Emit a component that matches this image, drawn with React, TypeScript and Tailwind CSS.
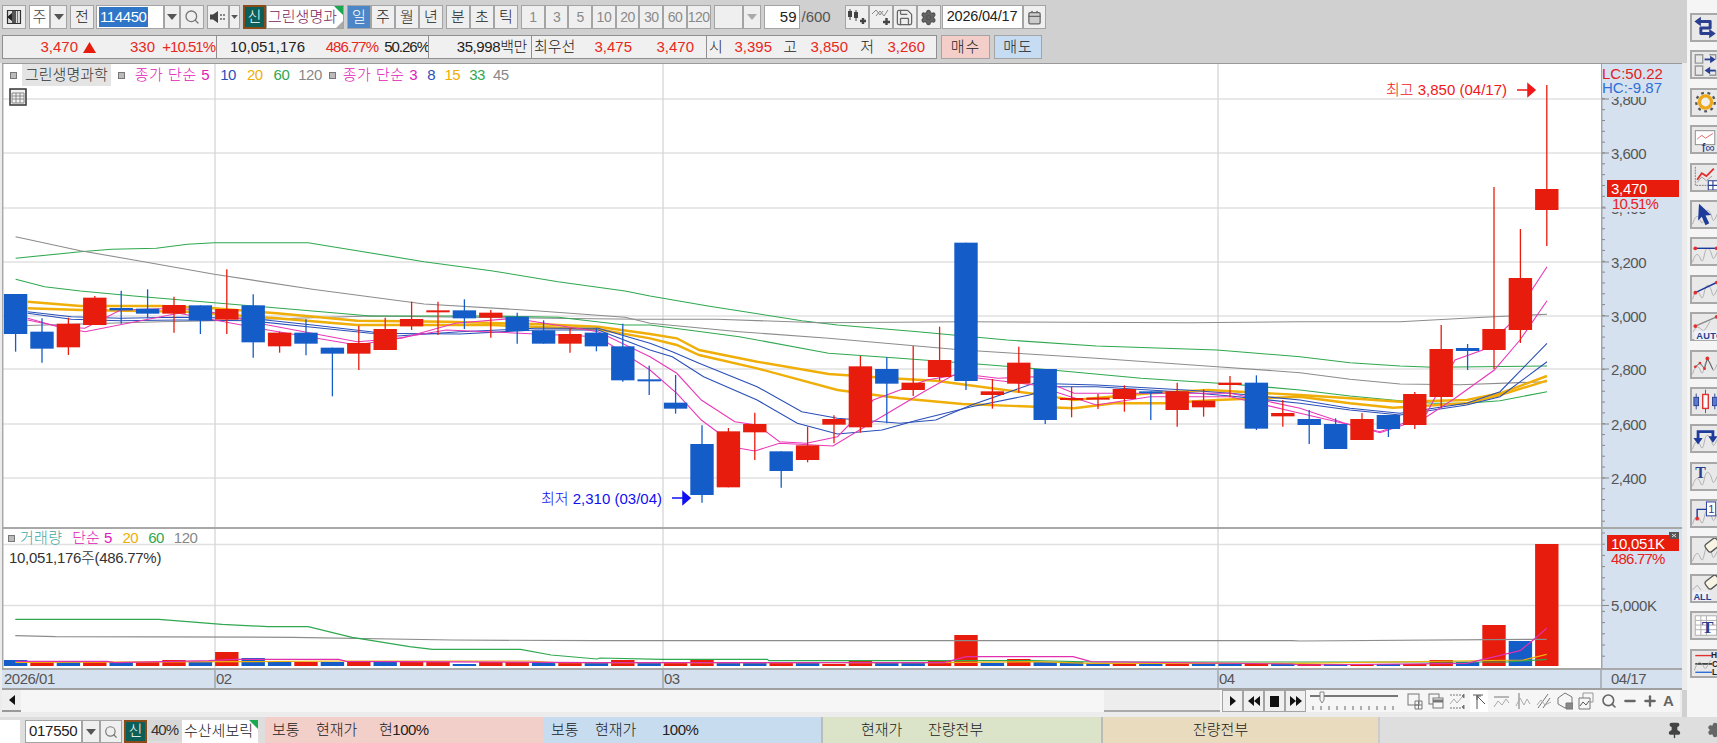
import { ReactNode } from "react"
import { Save, Search, Settings, Pin, Calendar, Minus, Plus } from "lucide-react"

const RED = "#e81c0c"
const BLUE = "#145cc8"

// coordinates were read off crops, so each helper maps a crop back to page px
const a = (p: number[][]) => p.map(([x, y]) => [x / 2.24, 230 + y / 3])
const b = (p: number[][]) => p.map(([x, y]) => [650 + x / 2.24, 230 + y / 3])
const c = (p: number[][]) => p.map(([x, y]) => [1300 + x / 3, 240 + y / 3])
const toPts = (p: number[][]) => p.map(([x, y]) => `${x.toFixed(1)},${y.toFixed(1)}`).join(" ")

const priceLines = [
  {
    color: "#2fa84f", w: 1.1, pts: [
      ...a([[35, 85], [180, 65], [250, 58], [350, 55], [420, 43], [480, 38], [690, 38], [800, 62], [950, 95], [1100, 122], [1250, 155], [1400, 183]]),
      ...b([[0, 198], [130, 228], [340, 272], [420, 285], [600, 305], [800, 330], [1000, 348], [1270, 360]]),
      ...c([[0, 350], [150, 368], [300, 378], [400, 382], [741, 378]]),
    ],
  },
  {
    color: "#8c8c8c", w: 1.1, pts: [
      ...a([[35, 20], [180, 62], [300, 90], [480, 133], [700, 178], [950, 222], [1200, 242], [1400, 262]]),
      ...b([[0, 280], [200, 305], [400, 325], [700, 360], [1000, 385], [1270, 410]]),
      ...c([[0, 398], [150, 418], [300, 432], [480, 434], [741, 425]]),
    ],
  },
  {
    color: "#8c8c8c", w: 1.1, pts: [
      ...a([[40, 287], [360, 275], [480, 272], [830, 258], [1430, 268]]),
      ...b([[150, 268], [380, 278], [700, 275], [1210, 278]]),
      ...c([[0, 245], [300, 245], [550, 232], [741, 223]]),
    ],
  },
  {
    color: "#2fa84f", w: 1.1, pts: [
      ...a([[35, 148], [100, 170], [180, 183], [300, 198], [480, 218], [700, 243], [830, 258], [1100, 258], [1250, 262], [1400, 285]]),
      ...b([[0, 285], [200, 320], [400, 370], [560, 385], [740, 403], [900, 420], [1100, 445], [1300, 462]]),
      ...c([[0, 450], [150, 468], [300, 482], [400, 490], [500, 490], [600, 482], [741, 455]]),
    ],
  },
  {
    color: "#f0ae08", w: 2.4, pts: [
      ...a([[62, 215], [180, 228], [360, 228], [480, 235], [620, 250], [800, 272], [1000, 275], [1200, 282], [1340, 290]]),
      ...b([[0, 312], [60, 325], [110, 360], [240, 395], [400, 432], [540, 445], [640, 452], [850, 490], [950, 510], [1120, 490], [1250, 480]]),
      ...c([[0, 465], [150, 475], [300, 485], [500, 480], [600, 460], [741, 408]]),
    ],
  },
  {
    color: "#f0ae08", w: 2.4, pts: [
      ...a([[62, 235], [180, 240], [420, 245], [620, 265], [800, 285], [1100, 285], [1340, 298]]),
      ...b([[0, 325], [60, 345], [110, 375], [240, 415], [420, 480], [560, 505], [700, 522], [950, 535], [1040, 520], [1150, 520], [1270, 510]]),
      ...c([[0, 470], [150, 490], [280, 503], [500, 490], [600, 465], [741, 422]]),
    ],
  },
  {
    color: "#2a4fb8", w: 1.1, pts: [
      ...a([[62, 245], [160, 260], [270, 265], [400, 262], [560, 265], [700, 285], [830, 305], [890, 318], [1030, 305], [1200, 295], [1340, 295]]),
      ...b([[0, 340], [50, 365], [110, 400], [240, 470], [340, 545], [420, 565], [560, 580], [640, 570], [720, 525], [860, 460], [1000, 465], [1200, 480], [1300, 490]]),
      ...c([[0, 480], [150, 505], [300, 520], [500, 490], [600, 455], [741, 310]]),
    ],
  },
  {
    color: "#2a4fb8", w: 1.1, pts: [
      ...a([[62, 250], [160, 268], [270, 272], [400, 270], [560, 272], [700, 292], [830, 310], [1030, 312], [1200, 300], [1340, 300]]),
      ...b([[0, 360], [50, 380], [120, 440], [240, 510], [330, 580], [420, 612], [520, 600], [600, 570], [720, 530], [850, 495], [900, 470], [1000, 470], [1200, 487], [1300, 498]]),
      ...c([[0, 490], [150, 510], [300, 525], [500, 495], [600, 470], [741, 365]]),
    ],
  },
  {
    color: "#e838b8", w: 1.1, pts: [
      ...a([[62, 265], [130, 290], [190, 295], [270, 240], [400, 235], [470, 245], [600, 285], [800, 335], [900, 325], [1020, 280], [1150, 265], [1340, 305]]),
      ...b([[0, 380], [60, 430], [115, 510], [190, 575], [240, 585], [290, 635], [350, 640], [420, 620], [500, 510], [620, 450], [700, 432], [780, 445], [860, 440], [950, 490], [1000, 490], [1120, 490], [1300, 490]]),
      ...c([[0, 505], [130, 548], [240, 578], [310, 555], [380, 520], [465, 360], [548, 330], [627, 255], [741, 80]]),
    ],
  },
  {
    color: "#e838b8", w: 1.1, pts: [
      ...a([[62, 270], [190, 305], [400, 250], [600, 300], [800, 345], [1000, 300], [1340, 320]]),
      ...b([[0, 420], [60, 490], [115, 570], [200, 655], [235, 663], [290, 640], [410, 648], [500, 575], [620, 480], [680, 435], [860, 465], [1000, 525], [1120, 500], [1300, 500]]),
      ...c([[0, 520], [130, 550], [240, 575], [310, 550], [380, 530], [465, 475], [583, 390], [660, 300], [741, 182]]),
    ],
  },
]

// up?, body top, body bottom, wick top, wick bottom
const candlesCrop: [number, number, number, number, number][] = [
  [0, 192, 312, 192, 365], [0, 305, 356, 265, 398], [1, 281, 352, 263, 375], [1, 203, 285, 198, 285],
  [0, 234, 241, 182, 281], [0, 236, 251, 178, 265], [1, 225, 251, 200, 308], [0, 226, 271, 226, 312],
  [1, 237, 269, 118, 312], [0, 226, 337, 193, 383], [1, 308, 349, 305, 368], [0, 308, 341, 268, 376],
  [0, 353, 371, 353, 499], [1, 339, 371, 287, 420], [1, 297, 360, 263, 360], [1, 267, 289, 215, 300],
  [1, 241, 243, 215, 315], [0, 241, 265, 208, 297], [1, 248, 263, 240, 323], [0, 260, 303, 248, 341],
  [0, 301, 341, 271, 341], [1, 312, 341, 295, 368], [0, 308, 349, 295, 364], [0, 349, 451, 281, 455],
  [0, 448, 453, 407, 495], [0, 518, 536, 435, 551], [0, 642, 795, 586, 818], [1, 604, 772, 594, 772],
  [1, 582, 607, 548, 690], [0, 664, 723, 664, 773], [1, 646, 690, 590, 697], [1, 567, 584, 556, 640],
  [1, 409, 592, 378, 608], [0, 417, 461, 382, 580], [1, 458, 480, 348, 498], [1, 390, 441, 290, 452],
  [0, 38, 453, 38, 480], [1, 484, 495, 447, 536], [1, 398, 461, 350, 488], [0, 417, 570, 417, 582],
  [1, 504, 507, 470, 562], [1, 503, 507, 492, 537], [1, 477, 507, 466, 545], [0, 484, 487, 484, 570],
  [1, 484, 540, 458, 590], [1, 512, 532, 478, 560], [1, 458, 465, 438, 502], [0, 458, 596, 436, 600],
  [1, 549, 559, 510, 590], [0, 567, 585, 540, 642], [0, 582, 657, 565, 657],
]
const candles = [
  ...candlesCrop.map(([u, t, bt, wt, wb]) => [u, 230 + t / 3, 230 + bt / 3, 230 + wt / 3, 230 + wb / 3]),
  [1, 419, 440, 413, 440], [0, 415, 429, 415, 437], [1, 394, 425, 392, 429], [1, 349, 397, 325, 408],
  [0, 348, 351, 344, 370], [1, 329, 350, 187, 369], [1, 278, 330, 229, 343], [1, 189, 210, 85, 246],
]
const cx = (i: number) => 15.6 + i * 26.4

const volumes: [number, number][] = [
  [0, 660], [1, 662], [0, 662], [1, 662], [0, 662], [1, 662], [1, 660], [0, 662], [1, 652], [0, 658],
  [0, 662], [1, 662], [0, 662], [1, 661], [0, 662], [1, 662], [1, 662], [0, 664], [1, 662], [1, 662],
  [0, 662], [1, 663], [0, 663], [1, 660], [0, 663], [1, 663], [1, 660], [0, 663], [0, 663], [1, 663],
  [0, 663], [1, 664], [1, 661], [0, 663], [0, 663], [1, 661], [1, 635], [0, 663], [1, 659], [0, 662],
  [0, 662], [0, 663], [1, 663], [0, 663], [1, 663], [0, 663], [0, 663], [1, 663], [0, 663], [1, 664],
  [0, 664], [1, 664], [0, 664], [1, 664], [1, 660], [0, 662], [1, 625], [0, 641], [1, 544],
]

const v6 = (p: number[][]) => p.map(([x, y]) => [x / 2.613, 500 + y / 3])
const v7 = (p: number[][]) => p.map(([x, y]) => [600 + x / 2.24, 600 + y / 3])
const v5 = (p: number[][]) => p.map(([x, y]) => [1300 + x / 3, 500 + y / 3])
const volumeLines = [
  { color: "#8c8c8c", pts: [...v6([[40, 407], [145, 410], [765, 412], [1180, 420], [1560, 422]]), ...v7([[0, 122], [1550, 122]]), ...v5([[0, 423], [740, 418]])] },
  { color: "#2fa84f", pts: [...v6([[40, 358], [415, 358], [490, 365], [580, 373], [700, 380], [805, 380], [920, 412], [1070, 440], [1130, 448], [1360, 448], [1440, 465], [1560, 477]]), ...v7([[0, 174], [140, 178], [375, 178], [378, 182], [970, 182], [1110, 186], [1550, 186]]), ...v5([[0, 486], [620, 486], [740, 478]])] },
  { color: "#f0ae08", pts: [...v6([[40, 487], [620, 485], [905, 483], [1385, 483], [1450, 488]]), ...v7([[0, 188], [750, 188], [970, 185], [1100, 190]]), ...v5([[0, 490], [670, 480], [740, 463]])] },
  { color: "#e030b0", pts: [...v6([[40, 484], [280, 484], [300, 488], [545, 482], [620, 478], [885, 478], [905, 484], [1560, 488]]), ...v7([[770, 188], [820, 170], [1060, 170], [1100, 185], [1550, 192]]), ...v5([[0, 495], [500, 490], [550, 478], [660, 452], [700, 420], [740, 385]])] },
]

function Btn({ className = "", bg = "bg-[#efefef]", children }: { className?: string; bg?: string; children?: ReactNode }) {
  return (
    <div className={`flex h-[24px] shrink-0 items-center justify-center border border-[#a4a4a4] ${bg} ${className}`}>
      {children}
    </div>
  )
}

function Caret({ color = "#555" }: { color?: string }) {
  return (
    <svg width="10" height="6" viewBox="0 0 10 6">
      <path d="M0 0H10L5 6Z" fill={color} />
    </svg>
  )
}

function TopToolbar() {
  return (
    <div className="flex h-[24px] items-center pl-[2px] text-[15px] text-[#222]">
      <Btn className="w-[24px]">
        <svg width="16" height="16" viewBox="0 0 16 16">
          <path d="M1.500 1.500H14.500V14.500H1.500Z" fill="#ddd" stroke="#333" strokeWidth="1.200" />
          <path d="M6 2V14H10V2Z" fill="#555" />
          <path d="M1 8L6 4V12Z" fill="#222" />
          <path d="M11.500 2V14" stroke="#777" />
        </svg>
      </Btn>
      <Btn className="ml-[3px] w-[21px] text-[#444]" bg="bg-white">주</Btn>
      <Btn className="w-[17px]"><Caret /></Btn>
      <Btn className="ml-[3px] w-[24px]">전</Btn>
      <div className="ml-[2px] flex h-[24px] w-[68px] shrink-0 items-center border border-[#a4a4a4] bg-white pl-[2px]">
        <span className="bg-[#2f75c8] px-[1px] leading-[20px] tracking-[-0.4px] text-white">114450</span>
      </div>
      <Btn className="w-[16px]"><Caret /></Btn>
      <Btn className="w-[24px]"><Search size={16} color="#777" strokeWidth={2} /></Btn>
      <Btn className="ml-[3px] w-[22px]">
        <svg width="16" height="14" viewBox="0 0 16 14">
          <path d="M0 4.500H3L8 1V13L3 9.500H0Z" fill="#444" />
          <circle cx="11" cy="5" r="1" fill="#666" /><circle cx="14" cy="5" r="1" fill="#666" />
          <circle cx="11" cy="9" r="1" fill="#666" /><circle cx="14" cy="9" r="1" fill="#666" />
        </svg>
      </Btn>
      <Btn className="w-[11px]"><svg width="7" height="4" viewBox="0 0 10 6"><path d="M0 0H10L5 6Z" fill="#555" /></svg></Btn>
      <div className="ml-[3px] flex h-[24px] w-[23px] shrink-0 items-center justify-center border-2 border-[#8a4b18] bg-[#0c5f58] text-white">신</div>
      <div className="relative flex h-[24px] w-[78px] shrink-0 items-center overflow-hidden whitespace-nowrap border border-[#a4a4a4] bg-white pl-[1px] text-[#7a1a5a]">
        그린생명과
        <span className="absolute right-0 top-0 h-0 w-0 border-l-[9px] border-t-[9px] border-l-transparent border-t-[#18a850]" />
        <span className="absolute bottom-0 right-0 h-0 w-0 border-b-[7px] border-l-[7px] border-b-[#aaa] border-l-transparent" />
      </div>
      <Btn className="ml-[3px] w-[24px] text-white" bg="bg-[#4d86c6]">일</Btn>
      <Btn className="w-[24px]">주</Btn>
      <Btn className="w-[24px]">월</Btn>
      <Btn className="w-[24px]">년</Btn>
      <Btn className="ml-[3px] w-[24px]">분</Btn>
      <Btn className="w-[24px]">초</Btn>
      <Btn className="w-[24px]">틱</Btn>
      <div className="ml-[3px] flex tracking-[-0.5px] text-[#8a8a8a]">
        {["1", "3", "5", "10", "20", "30", "60", "120"].map((n) => (
          <Btn key={n} className="w-[23.7px] text-[14px]">{n}</Btn>
        ))}
      </div>
      <Btn className="ml-[3px] w-[29px]" />
      <Btn className="w-[18px]"><Caret color="#aaa" /></Btn>
      <div className="ml-[3px] flex h-[24px] w-[36px] shrink-0 items-center justify-end border border-[#a4a4a4] bg-white pr-[2px]">59</div>
      <span className="ml-[2px] w-[43px] shrink-0 text-[#555]">/600</span>
      <Btn className="w-[24px]">
        <svg width="20" height="18" viewBox="0 0 20 18">
          <path d="M3 1V12M9 2V13" stroke="#444" />
          <path d="M1 3H5V9H1ZM7 4H11V10H7Z" fill="#444" />
          <path d="M13 13H19M16 10V16" stroke="#444" strokeWidth="2.400" />
        </svg>
      </Btn>
      <Btn className="w-[24px]">
        <svg width="20" height="18" viewBox="0 0 20 18">
          <path d="M1 6L5 2L9 7L12 3" fill="none" stroke="#888" />
          <path d="M5 8L9 3L13 8L17 2" fill="none" stroke="#888" />
          <path d="M12 14H19M15.500 10V17" stroke="#444" strokeWidth="2.400" />
        </svg>
      </Btn>
      <Btn className="w-[24px]"><Save size={19} color="#666" strokeWidth={1.6} /></Btn>
      <Btn className="w-[24px]"><Settings size={17} color="#555" fill="#666" strokeWidth={2} /></Btn>
      <div className="ml-[1px] flex h-[24px] w-[81px] shrink-0 items-center justify-center border border-[#a4a4a4] bg-white text-[14.500px] tracking-[-0.2px]">2026/04/17</div>
      <Btn className="w-[23px]"><Calendar size={15} color="#666" fill="#ccc" /></Btn>
    </div>
  )
}

function Cell({ w, className = "", children }: { w: string; className?: string; children: ReactNode }) {
  return <span className={`shrink-0 whitespace-nowrap ${w} ${className}`}>{children}</span>
}

function QuoteBar() {
  const panel = "flex h-[24px] shrink-0 items-center border border-[#909090] bg-[#f0f0f0]"
  return (
    <div className="mt-[6px] flex items-center pl-[2px] text-[15px] text-[#222]">
      <div className={`${panel} w-[215px]`}>
        <Cell w="w-[75px]" className="text-right text-[#e8281c]">3,470</Cell>
        <svg className="ml-[5px] shrink-0" width="13" height="11" viewBox="0 0 13 11"><path d="M6.500 0L13 11H0Z" fill={RED} /></svg>
        <Cell w="w-[59px]" className="text-right text-[#e8281c]">330</Cell>
        <Cell w="w-[60px]" className="text-right tracking-[-1px] text-[#e8281c]">+10.51%</Cell>
      </div>
      <div className={`${panel} w-[213px] -ml-px`}>
        <Cell w="w-[88px]" className="text-right">10,051,176</Cell>
        <Cell w="w-[73px]" className="text-right tracking-[-1px] text-[#e8281c]">486.77%</Cell>
        <Cell w="w-[51px]" className="text-right tracking-[-1px]">50.26%</Cell>
      </div>
      <div className={`${panel} w-[104px] -ml-px`}>
        <Cell w="w-[98px]" className="text-right tracking-[-0.4px]">35,998백만</Cell>
      </div>
      <div className={`${panel} w-[176px] -ml-px`}>
        <Cell w="w-[47px]" className="pl-[2px]">최우선</Cell>
        <Cell w="w-[53px]" className="text-right text-[#e8281c]">3,475</Cell>
        <Cell w="w-[62px]" className="text-right text-[#e8281c]">3,470</Cell>
      </div>
      <div className={`${panel} w-[231px] -ml-px`}>
        <Cell w="w-[17px]" className="pl-[2px]">시</Cell>
        <Cell w="w-[48px]" className="text-right text-[#e8281c]">3,395</Cell>
        <Cell w="w-[25px]" className="text-right">고</Cell>
        <Cell w="w-[51px]" className="text-right text-[#e8281c]">3,850</Cell>
        <Cell w="w-[26px]" className="text-right">저</Cell>
        <Cell w="w-[51px]" className="text-right text-[#e8281c]">3,260</Cell>
      </div>
      <div className="ml-[4px] flex h-[24px] w-[49px] shrink-0 items-center justify-center border border-[#a4a4a4] bg-[#f4cfc9] tracking-[1px]">매수</div>
      <div className="ml-[4px] flex h-[24px] w-[48px] shrink-0 items-center justify-center border border-[#a4a4a4] bg-[#c6dcf2] tracking-[1px]">매도</div>
    </div>
  )
}

function Dot() {
  return <span className="inline-block h-[7px] w-[7px] shrink-0 border border-[#777] bg-[#bbb]" />
}

function PricePlot() {
  const grid = [99, 153, 208, 262, 316, 369, 424, 478]
  return (
    <svg className="block" width="1599" height="463" viewBox="2 64 1599 463">
      {grid.map((y) => <line key={y} x1="2" x2="1601" y1={y} y2={y} stroke="#e0e0e0" strokeWidth="1.500" />)}
      {[215, 663, 1218].map((x) => <line key={x} x1={x} x2={x} y1="63" y2="527" stroke="#d6d6d6" strokeWidth="1.300" />)}
      <line x1="2.700" x2="2.700" y1="63" y2="527" stroke="#a8a8a8" strokeWidth="1.500" />
      {priceLines.map((l, i) => (
        <polyline key={i} points={toPts(l.pts)} fill="none" stroke={l.color} strokeWidth={l.w} />
      ))}
      {candles.map(([u, t, bt, wt, wb], i) => (
        <g key={i} fill={u ? RED : BLUE} stroke={u ? RED : BLUE}>
          <line x1={cx(i)} x2={cx(i)} y1={wt} y2={wb} strokeWidth="1.300" />
          <rect x={cx(i) - 11.7} y={t} width="23.400" height={Math.max(bt - t, 2)} strokeWidth="0" />
        </g>
      ))}
      <text x="1386" y="95" fill="#f01818" fontSize="15">최고 3,850 (04/17)</text>
      <path d="M1517 90H1530M1528 84L1535 90L1528 96Z" stroke="#f01818" strokeWidth="1.500" fill="#f01818" />
      <text x="541" y="504" fill="#1010f0" fontSize="15">최저 2,310 (03/04)</text>
      <path d="M672 498H685M683 492L690 498L683 504Z" stroke="#1010f0" strokeWidth="1.500" fill="#1010f0" />
    </svg>
  )
}

function axisTicks(from: number, to: number, step: number) {
  const out: number[] = []
  for (let y = from; y <= to; y += step) out.push(y)
  return out
}

function PriceAxis() {
  const labels: [number, string][] = [[99, "3,800"], [153, "3,600"], [208, "3,400"], [262, "3,200"], [316, "3,000"], [369, "2,800"], [424, "2,600"], [478, "2,400"]]
  return (
    <svg className="block" width="81" height="463" viewBox="1601 64 81 463">
      <line x1="1601.500" x2="1601.500" y1="63" y2="527" stroke="#a0a6ac" strokeWidth="2" />
      {axisTicks(88, 525, 10.83).map((y) => <line key={y} x1="1602" x2="1605" y1={y} y2={y} stroke="#888" />)}
      {labels.map(([y, t]) => (
        <g key={t}>
          <line x1="1602" x2="1609" y1={y} y2={y} stroke="#888" />
          <text x="1611" y={y + 5.5} fill="#555" fontSize="15" letterSpacing="-0.5">{t}</text>
        </g>
      ))}
      <rect x="1602" y="64" width="70" height="33" fill="#d5e1ef" />
      <text x="1602" y="79" fill="#e02020" fontSize="15">LC:50.22</text>
      <text x="1602" y="93" fill="#2f6fd8" fontSize="15">HC:-9.87</text>
      <rect x="1606" y="197" width="72" height="15" fill="#d5e1ef" />
      <rect x="1607" y="180" width="72" height="17" fill={RED} />
      <text x="1611" y="194" fill="#fff" fontSize="15" letterSpacing="-0.3">3,470</text>
      <text x="1612" y="209" fill="#e82020" fontSize="15" letterSpacing="-0.8">10.51%</text>
    </svg>
  )
}

function VolumePlot() {
  return (
    <svg className="block" width="1599" height="139" viewBox="2 529 1599 139">
      <line x1="2" x2="1601" y1="544.500" y2="544.500" stroke="#e0e0e0" strokeWidth="1.500" />
      <line x1="2" x2="1601" y1="605.500" y2="605.500" stroke="#e0e0e0" strokeWidth="1.500" />
      {[215, 663, 1218].map((x) => <line key={x} x1={x} x2={x} y1="527" y2="668" stroke="#d6d6d6" strokeWidth="1.300" />)}
      <line x1="2.700" x2="2.700" y1="527" y2="668" stroke="#a8a8a8" strokeWidth="1.500" />
      {volumes.map(([u, top], i) => (
        <rect key={i} x={cx(i) - 11.7} y={top} width="23.400" height={666 - top} fill={u ? RED : BLUE} />
      ))}
      {volumeLines.map((l, i) => (
        <polyline key={i} points={toPts(l.pts)} fill="none" stroke={l.color} strokeWidth="1.200" />
      ))}
    </svg>
  )
}

function VolumeAxis() {
  return (
    <svg className="block" width="81" height="139" viewBox="1601 529 81 139">
      <line x1="1601.500" x2="1601.500" y1="527" y2="668" stroke="#a0a6ac" strokeWidth="2" />
      {axisTicks(533, 666, 11.2).map((y) => <line key={y} x1="1602" x2="1605" y1={y} y2={y} stroke="#888" />)}
      <line x1="1602" x2="1609" y1="605.500" y2="605.500" stroke="#888" />
      <text x="1611" y="611" fill="#555" fontSize="15" letterSpacing="-0.3">5,000K</text>
      <rect x="1607" y="535" width="72" height="16" fill={RED} />
      <text x="1611" y="549" fill="#fff" fontSize="15" letterSpacing="-0.3">10,051K</text>
      <text x="1611" y="564" fill="#e82020" fontSize="15" letterSpacing="-0.8">486.77%</text>
      <rect x="1669" y="532" width="10" height="7" fill="#555" />
      <path d="M1672 534L1676 537M1676 534L1672 537" stroke="#ddd" />
    </svg>
  )
}

function TimeAxis() {
  const cuts: [number, string][] = [[215, "02"], [663, "03"], [1218, "04"]]
  return (
    <svg className="block" width="1680" height="18" viewBox="2 670 1680 18">
      <text x="4" y="684" fill="#555" fontSize="15" letterSpacing="-0.5">2026/01</text>
      {cuts.map(([x, t]) => (
        <g key={t}>
          <line x1={x} x2={x} y1="668" y2="690" stroke="#888" />
          <text x={x + 1} y="684" fill="#555" fontSize="15" letterSpacing="-0.5">{t}</text>
        </g>
      ))}
      <line x1="1601" x2="1601" y1="670" y2="690" stroke="#888" />
      <text x="1611" y="684" fill="#555" fontSize="15" letterSpacing="-0.5">04/17</text>
    </svg>
  )
}

function MiniIcon({ w = 17, children }: { w?: number; children: ReactNode }) {
  return <svg className="shrink-0" width={w} height="18" viewBox={`0 0 ${w} 18`} fill="none" stroke="#777">{children}</svg>
}

function ScrollBar() {
  const play = "flex h-[22px] w-[21px] shrink-0 items-center justify-center border border-[#a4a4a4] bg-[#f0f0f0]"
  return (
    <div className="flex h-[27px] w-[1682px] items-start bg-[#ececec] pl-[2px]">
      <div className="flex h-[22px] w-[1678px] items-center bg-[#f6f6f6]">
        <div className="flex h-[22px] w-[19px] shrink-0 items-center justify-center border-b-2 border-b-[#999] bg-[#efefef]">
          <svg width="6" height="10" viewBox="0 0 6 10"><path d="M6 0V10L0 5Z" fill="#111" /></svg>
        </div>
        <div className="ml-[1083px] h-[22px] w-[116px] shrink-0 border-b-2 border-b-[#aaa] bg-[#ededed]" />
        <div className={`${play} ml-[2px]`}><svg width="6" height="10" viewBox="0 0 6 10"><path d="M0 0V10L6 5Z" fill="#111" /></svg></div>
        <div className={play}><svg width="12" height="10" viewBox="0 0 12 10"><path d="M6 0V10L0 5ZM12 0V10L6 5Z" fill="#111" /></svg></div>
        <div className={play}><svg width="9" height="11" viewBox="0 0 9 11"><path d="M0 0H9V11H0Z" fill="#111" /></svg></div>
        <div className={play}><svg width="12" height="10" viewBox="0 0 12 10"><path d="M0 0V10L6 5ZM6 0V10L12 5Z" fill="#111" /></svg></div>
        <svg className="ml-[4px] shrink-0" width="88" height="22" viewBox="0 0 88 22">
          <path d="M0 6H88" stroke="#777" strokeWidth="2" />
          <path d="M10 2H14V10L12 13L10 10Z" fill="#f4f4f4" stroke="#888" />
          {axisTicks(3, 88, 8).map((x) => <line key={x} x1={x} x2={x} y1="16" y2="20" stroke="#666" />)}
        </svg>
        <div className="ml-[9px] flex items-center gap-[5px]">
          <MiniIcon w={16}><rect x="1" y="2" width="11" height="11" /><path d="M8 9H15V17H8ZM11.500 9V17M8 13H15" /></MiniIcon>
          <MiniIcon w={16}><rect x="1" y="2" width="10" height="10" /><rect x="5" y="6" width="10" height="10" fill="#f6f6f6" /><path d="M5 9H15" strokeWidth="3" /></MiniIcon>
          <MiniIcon w={16}><path d="M1 3H13M1 16H13" strokeDasharray="2 1" /><path d="M1 12L5 7L8 11L13 5" stroke="#aaa" /><path d="M15 2L13 4L15 6ZM15 13L13 15L15 17Z" fill="#777" /></MiniIcon>
          <div className="flex h-[22px] w-[18px] shrink-0 items-center justify-center bg-white">
            <MiniIcon w={16}><path d="M2 3H12M6 3V17M6 4L14 12M6 4H10M6 4V8" stroke="#555" /></MiniIcon>
          </div>
          <MiniIcon w={17}><path d="M1 5H16" /><path d="M1 15L5 9L9 13L13 7L16 11" stroke="#aaa" /></MiniIcon>
          <MiniIcon w={16}><path d="M4 1V17" /><path d="M1 14L5 6L9 13L12 7L15 12" stroke="#aaa" /></MiniIcon>
          <MiniIcon w={16}><path d="M2 16L12 2M7 16L14 6" /><path d="M1 13L5 8L9 13L15 10" stroke="#aaa" /></MiniIcon>
          <MiniIcon w={16}><path d="M1 6L8 1L15 5V12L8 16L1 12Z" /><path d="M9 11H16V17H9Z" fill="#888" /></MiniIcon>
          <MiniIcon w={16}><path d="M5 1H15V10H5Z" stroke="#999" /><path d="M1 6H12V17H1Z" fill="#f6f6f6" /><path d="M2 14L5 10L8 13L11 9" stroke="#555" /></MiniIcon>
        </div>
        <Search className="ml-[7px] shrink-0" size={16} color="#666" strokeWidth={2.4} />
        <Minus className="ml-[5px] shrink-0" size={16} color="#666" strokeWidth={3.5} />
        <Plus className="ml-[4px] shrink-0" size={16} color="#666" strokeWidth={3.5} />
        <span className="ml-[5px] shrink-0 text-[15px] font-bold text-[#666]">A</span>
      </div>
    </div>
  )
}

const wave = "M0 25C3 15 6 15 8 20S11 26 13 16S19 10 21 18S25 16 30 8"

function Wave() {
  return <path d={wave} fill="none" stroke="#aaa" strokeWidth="1" />
}

function Eraser() {
  return <rect x="14" y="3" width="15" height="10" rx="3" transform="rotate(-38 21 8)" fill="#f8f4e4" stroke="#555" strokeWidth="1.400" />
}

const sideIcons: ReactNode[] = [
  <g key="a">
    <path d="M8 7H19V14H9V20H20" fill="none" stroke="#2a3f8f" strokeWidth="3.200" strokeLinejoin="round" />
    <path d="M2 7L9 2V12ZM25 20L18 15V25Z" fill="#2a3f8f" />
  </g>,
  <g key="b" fill="none">
    <path d="M3 3H11V12H3ZM3 15H11V25H3ZM18 3H25V8M18 25H25V20" stroke="#999" strokeWidth="1.500" />
    <path d="M13 8H20" stroke="#2a3f8f" strokeWidth="2" />
    <path d="M25 8L19 4V12Z" fill="#2a3f8f" />
    <path d="M17 20H25" stroke="#2a3f8f" strokeWidth="2" />
    <path d="M13 20L19 16V24Z" fill="#2a3f8f" />
  </g>,
  <g key="c">
    <circle cx="14" cy="14" r="6.500" fill="#f0f0f0" stroke="#eea818" strokeWidth="3.500" />
    <circle cx="14" cy="14" r="10" fill="none" stroke="#555" strokeWidth="2.500" strokeDasharray="3 4" />
  </g>,
  <g key="d">
    <rect x="3" y="4" width="21" height="15" fill="#fff" stroke="#888" />
    <path d="M5 13L10 9L14 12L22 7" fill="none" stroke="#e06060" />
    <text x="10" y="27" fontSize="14" fill="#1e3a8a">f∞</text>
  </g>,
  <g key="e" fill="none">
    <path d="M3 3V23H22" stroke="#777" strokeDasharray="2 1" />
    <path d="M5 17L10 10L15 13L23 5" stroke="#e03030" strokeWidth="2" />
    <path d="M5 20L10 14L15 18L21 13" stroke="#999" />
    <path d="M17 18H27V28H17ZM22 18V28M17 23H27" stroke="#2a3f8f" fill="#fff" strokeWidth="1.200" />
  </g>,
  <g key="f"><Wave /><path d="M7 3L20 15L14 15.500L18 24L14 26L10 17L6 21Z" fill="#1e3a9a" /></g>,
  <g key="g"><Wave /><path d="M3 10H30" stroke="#1e3a9a" strokeWidth="1.500" /><circle cx="3" cy="10" r="2" fill="#e03030" /><circle cx="26" cy="10" r="2" fill="#e03030" /></g>,
  <g key="h"><Wave /><path d="M3 18L26 7" stroke="#1e3a9a" strokeWidth="1.500" /><circle cx="3" cy="18" r="2" fill="#e03030" /><circle cx="26" cy="7" r="2" fill="#e03030" /></g>,
  <g key="i">
    <path d="M1 19C4 12 7 14 10 17S15 14 19 8" fill="none" stroke="#aaa" />
    <path d="M3 13L26 3" stroke="#888" strokeWidth="1.500" /><circle cx="3" cy="13" r="2" fill="#e03030" /><circle cx="26" cy="3" r="2" fill="#e03030" />
    <rect x="2" y="18" width="25" height="10" fill="#eef2fa" />
    <text x="4" y="27" fontSize="10" fontWeight="700" fill="#2a3f8f" letterSpacing="0.3">AUTO</text>
  </g>,
  <g key="j"><Wave /><path d="M3 17L8 13L13 19L16 8L22 20" fill="none" stroke="#555" /><circle cx="3" cy="17" r="1.500" fill="#e03030" /><circle cx="8" cy="13" r="1.500" fill="#e03030" /><circle cx="16" cy="8" r="2" fill="#e03030" /><circle cx="13" cy="19" r="1.500" fill="#e03030" /></g>,
  <g key="k" fill="#fff">
    <path d="M4 6V23M14 2V27M24 6V23" stroke="#2a3f8f" />
    <rect x="1.500" y="10" width="5" height="9" fill="#5a7ad0" stroke="#2a3f8f" />
    <path d="M14 2V27" stroke="#e03030" />
    <rect x="11" y="7" width="6" height="15" stroke="#e03030" strokeWidth="1.500" />
    <rect x="21.500" y="10" width="5" height="9" fill="#5a7ad0" stroke="#2a3f8f" />
  </g>,
  <g key="l"><Wave /><path d="M6 14V6H22V12" fill="none" stroke="#1e3a9a" strokeWidth="3" /><path d="M1 13H11L6 20ZM17 11H27L22 18Z" fill="#1e3a9a" /></g>,
  <g key="m"><Wave /><text x="3" y="16" fontSize="17" fontWeight="700" fill="#2a3f8f" fontFamily="'Liberation Serif', serif">T</text></g>,
  <g key="n">
    <Wave />
    <path d="M5 20V9H18" fill="none" stroke="#1e3a9a" strokeWidth="1.500" /><circle cx="5" cy="19" r="2" fill="#e03030" />
    <rect x="15" y="1" width="10" height="15" fill="#fff" stroke="#1e3a9a" />
    <text x="17" y="13" fontSize="12" fill="#1e3a9a">1</text>
  </g>,
  <g key="o"><Wave /><Eraser /></g>,
  <g key="p">
    <path d="M0 16L5 11L9 16" fill="none" stroke="#aaa" />
    <Eraser />
    <rect x="0" y="18" width="18" height="10" fill="#eef2fa" />
    <text x="1" y="27" fontSize="10" fontWeight="700" fill="#2a3f8f">ALL</text>
  </g>,
  <g key="q">
    <path d="M3 3H26V24H3ZM3 8H26M3 13H26M3 18H26M9 3V24M15 3V24" fill="#fff" stroke="#aaa" />
    <text x="10" y="22" fontSize="19" fontWeight="700" fill="#2a3f8f" fontFamily="'Liberation Serif', serif">T</text>
  </g>,
  <g key="r">
    <path d="M3 6H21" stroke="#e03030" strokeWidth="1.500" /><path d="M3 15H21" stroke="#111" strokeWidth="1.500" /><path d="M3 24H21" stroke="#2f6fd8" strokeWidth="1.500" />
    <path d="M2 22C6 10 9 12 12 18S16 14 20 11" fill="none" stroke="#aaa" />
    <text x="20" y="9" fontSize="9" fontWeight="700" fill="#222">H</text>
    <text x="21" y="18" fontSize="9" fontWeight="700" fill="#222">C</text>
    <text x="21" y="27" fontSize="9" fontWeight="700" fill="#222">L</text>
  </g>,
]

function SideToolbar() {
  return (
    <div className="flex h-[717px] w-[30px] shrink-0 flex-col gap-[8.4px] overflow-hidden bg-[#f5f5f5] pl-[3px] pt-[13px]">
      {sideIcons.map((icon, i) => (
        <div key={i} className="flex h-[29px] w-[40px] shrink-0 items-center border-2 border-[#a8a8a8] bg-[#e9e9e9]">
          <svg className="shrink-0" width="27" height="26" viewBox="0 0 28 28">{icon}</svg>
        </div>
      ))}
    </div>
  )
}

function BottomBar() {
  const cell = "flex h-[26px] shrink-0 items-center whitespace-pre"
  return (
    <div className="flex h-[26px] items-center bg-[#dedede] text-[15px] text-[#222]">
      <div className="h-[23px] w-[20px] shrink-0 self-end bg-white" />
      <div className="ml-[5px] flex h-[23px] w-[57px] shrink-0 items-center self-end border border-[#a4a4a4] bg-white pl-[3px] tracking-[-0.3px]">017550</div>
      <div className="flex h-[23px] w-[18px] shrink-0 items-center justify-center self-end border border-[#a4a4a4] bg-[#efefef]"><Caret /></div>
      <div className="flex h-[23px] w-[22px] shrink-0 items-center justify-center self-end border border-[#a4a4a4] bg-[#efefef]"><Search size={14} color="#777" strokeWidth={2} /></div>
      <div className="ml-[2px] flex h-[23px] w-[23px] shrink-0 items-center justify-center self-end border-2 border-[#8a4b18] bg-[#0c5f58] text-white">신</div>
      <div className="flex h-[21px] w-[35px] shrink-0 items-center justify-center bg-[#d8d8d8] tracking-[-1px] text-[#333]">40%</div>
      <div className="relative flex h-[23px] w-[76px] shrink-0 items-center self-end overflow-hidden whitespace-nowrap bg-white pl-[2px]">
        수산세보릭
        <span className="absolute right-0 top-0 h-0 w-0 border-l-[9px] border-t-[9px] border-l-transparent border-t-[#18a850]" />
      </div>
      <div className={`${cell} ml-[7px] w-[278px] bg-[#f3cfc9] pl-[7px]`}>
        <span className="w-[44px]">보통</span><span className="w-[63px]">현재가</span><span className="tracking-[-0.5px]">현100%</span>
      </div>
      <div className={`${cell} w-[278px] bg-[#c8dcf0] pl-[8px]`}>
        <span className="w-[44px]">보통</span><span className="w-[67px]">현재가</span><span className="tracking-[-0.5px]">100%</span>
      </div>
      <div className={`${cell} w-[280px] border-l-2 border-l-[#bbb] bg-[#dbe4c8] pl-[38px]`}>
        <span className="w-[67px]">현재가</span><span>잔량전부</span>
      </div>
      <div className={`${cell} w-[277px] border-l-2 border-l-[#bbb] bg-[#e9dbbe] pl-[90px]`}>잔량전부</div>
      <div className="flex h-[26px] flex-1 items-center justify-end gap-[24px] border-l-2 border-l-[#ccc]">
        <Pin size={17} color="#444" fill="#444" />
        <Settings className="-mr-[6px]" size={16} color="#666" fill="#666" />
      </div>
    </div>
  )
}

export default function App() {
  return (
    <div className="h-[743px] w-[1717px] overflow-hidden bg-white font-['Liberation_Sans','Noto_Sans_CJK_KR',sans-serif] font-light">
      <div className="flex h-[717px]">
        <div className="flex w-[1687px] shrink-0 flex-col bg-[#d0d0d0]">
          <div className="h-[63px] shrink-0 pt-[5px]">
            <TopToolbar />
            <QuoteBar />
          </div>
          <div className="flex w-[1687px] flex-col bg-[#ececec] pl-[2px]">
            <div className="relative flex h-[464px] w-[1680px] border-t border-t-[#9a9a9a] bg-white">
              <div className="absolute left-[8px] top-[2px] flex h-[18px] items-center gap-[7px] whitespace-nowrap text-[15px] text-[#e020b8]">
                <Dot />
                <span className="-ml-[2px] bg-[#e4e4e4] px-[3px] text-[#333]">그린생명과학</span>
                <Dot />
                <span className="ml-[3px] tracking-[0.5px]">종가 단순 5</span>
                <span className="ml-[3px] tracking-[-0.5px] text-[#2a4fb8]">10</span>
                <span className="ml-[4px] tracking-[-0.5px] text-[#f0ae08]">20</span>
                <span className="ml-[4px] tracking-[-0.5px] text-[#2fa84f]">60</span>
                <span className="ml-[2px] tracking-[-0.5px] text-[#888]">120</span>
                <Dot />
                <span className="tracking-[0.5px]">종가 단순 3</span>
                <span className="ml-[2px] text-[#2a4fb8]">8</span>
                <span className="ml-[2px] tracking-[-0.5px] text-[#f0ae08]">15</span>
                <span className="ml-[2px] tracking-[-0.5px] text-[#2fa84f]">33</span>
                <span className="ml-[1px] tracking-[-0.5px] text-[#888]">45</span>
              </div>
              <svg className="absolute left-[7px] top-[24px]" width="18" height="18" viewBox="0 0 18 18">
                <path d="M1 1H17V17H1Z" fill="#f2f2f2" stroke="#333" strokeWidth="1.500" />
                <path d="M3 5H15V15H3ZM7 5V15M11 5V15M3 8H15M3 11H15" fill="none" stroke="#888" />
              </svg>
              <PricePlot />
              <div className="w-[81px] bg-[#d5e1ef]"><PriceAxis /></div>
            </div>
            <div className="relative flex h-[141px] w-[1680px] border-t-2 border-t-[#a8a8a8] bg-white">
              <div className="absolute left-[6px] top-[0px] flex h-[18px] items-center gap-[10px] whitespace-nowrap text-[15px]">
                <Dot />
                <span className="-ml-[5px] tracking-[0.3px] text-[#3fa8a8]">거래량</span>
                <span className="text-[#e020b8]">단순 5</span>
                <span className="tracking-[-0.5px] text-[#f0ae08]">20</span>
                <span className="tracking-[-0.5px] text-[#2fa84f]">60</span>
                <span className="tracking-[-0.5px] text-[#888]">120</span>
              </div>
              <span className="absolute left-[7px] top-[18px] whitespace-nowrap text-[15px] tracking-[-0.3px] text-[#333]">10,051,176주(486.77%)</span>
              <VolumePlot />
              <div className="w-[81px] bg-[#d5e1ef]"><VolumeAxis /></div>
            </div>
            <div className="h-[22px] w-[1680px] border-b-2 border-t-2 border-b-[#a0a0a0] border-t-[#a8a8a8] bg-[#d5e1ef]"><TimeAxis /></div>
          </div>
          <ScrollBar />
        </div>
        <SideToolbar />
      </div>
      <BottomBar />
    </div>
  )
}
